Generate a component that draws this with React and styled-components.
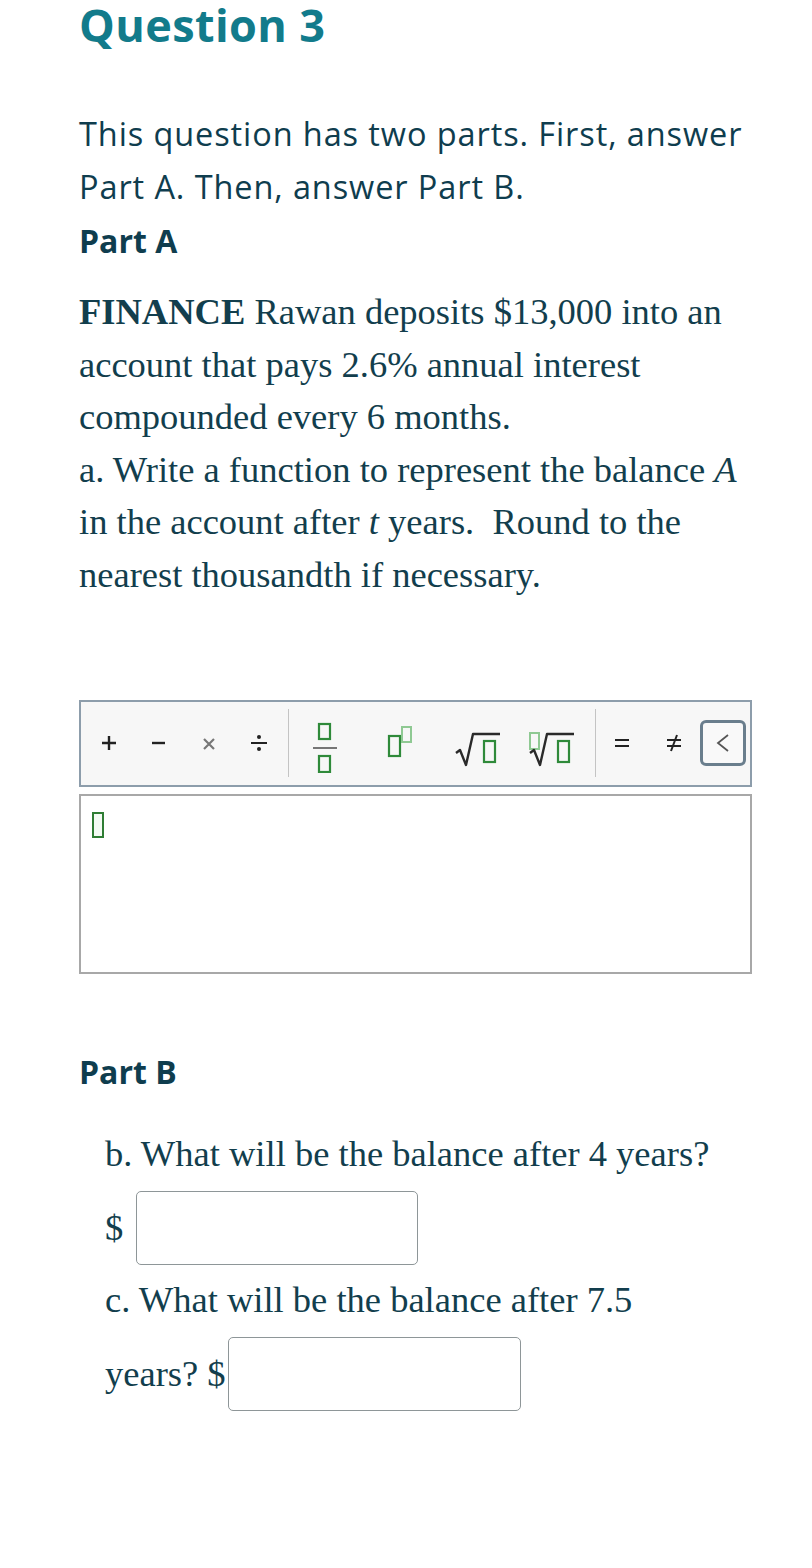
import styled, { createGlobalStyle } from "styled-components";

const GlobalStyle = createGlobalStyle`
  body {
    margin: 0;
    background: #ffffff;
  }
`;

const Page = styled.main`
  width: 812px;
  min-height: 1568px;
  box-sizing: border-box;
  padding: 0 60px 0 79px;
  font-family: "Open Sans", "Lato", sans-serif;
  color: #0f3d4e;
`;

const Title = styled.h1`
  margin: 0;
  font-size: 45px;
  line-height: 50px;
  font-weight: 700;
  letter-spacing: 0.4px;
  color: #127b8b;
`;

const Intro = styled.p`
  margin: 57px 0 0;
  font-size: 32.5px;
  line-height: 53px;
  letter-spacing: 0.9px;
`;

const PartTitle = styled.h2`
  margin: ${({ top }) => top}px 0 0;
  font-size: 32px;
  line-height: 53px;
  font-weight: 700;
`;

const Prompt = styled.div`
  margin-top: 19px;
  font-family: "Liberation Serif", "Times New Roman", serif;
  font-size: 36.5px;
  line-height: 52.6px;
  color: #123e4d;

  p {
    margin: 0;
  }
  b {
    font-weight: 700;
  }
`;

const Toolbar = styled.div`
  margin-top: 98px;
  height: 87px;
  box-sizing: border-box;
  border: 2px solid #8d9dab;
  background: #f7f7f7;
  display: flex;
  align-items: center;
  padding-left: 3px;
`;

const Key = styled.div`
  width: ${({ w }) => w}px;
  height: 60px;
  flex: none;
  display: flex;
  align-items: center;
  justify-content: center;
`;

const Divider = styled.div`
  width: 1px;
  height: 68px;
  flex: none;
  background: #c4c4c4;
  margin-left: ${({ before }) => before}px;
`;

const MoreKey = styled.div`
  width: 46px;
  height: 46px;
  box-sizing: border-box;
  flex: none;
  border: 3px solid #6a7e8d;
  border-radius: 6px;
  display: flex;
  align-items: center;
  justify-content: center;
  background: #f9f9f9;
`;

const AnswerBox = styled.div`
  margin-top: 7px;
  height: 180px;
  box-sizing: border-box;
  border: 2px solid #a8a8a8;
  background: #fff;
  padding: 16px 0 0 11px;
`;

const Slot = styled.span`
  display: block;
  width: 12px;
  height: 26px;
  box-sizing: border-box;
  border: 2.5px solid #2f7d34;
  background: #f4fbf4;
`;

const PartB = styled.section`
  padding-left: 26px;
  font-family: "Liberation Serif", "Times New Roman", serif;
  font-size: 36.5px;
  color: #123e4d;
`;

const Question = styled.p`
  margin: ${({ top }) => top}px 0 0;
  line-height: 52.6px;
`;

const EntryRow = styled.div`
  margin-top: ${({ top }) => top}px;
  display: flex;
  align-items: center;
  gap: ${({ gap }) => gap}px;
  line-height: 1;
`;

const Entry = styled.div`
  width: ${({ w }) => w}px;
  height: 74px;
  box-sizing: border-box;
  border: 1.5px solid #8e9698;
  border-radius: 5px;
  background: #fff;
`;

const green = "#2f8a3a";
const lightGreen = "#8fc993";
const ink = "#222";

// plain operator glyphs drawn as strokes so their weight stays even
const PlusIcon = () => (
  <svg width="20" height="20" viewBox="0 0 20 20">
    <path d="M10 3 V17 M3 10 H17" stroke={ink} strokeWidth="2.4" />
  </svg>
);

const MinusIcon = () => (
  <svg width="20" height="20" viewBox="0 0 20 20">
    <path d="M3 10 H16" stroke={ink} strokeWidth="2.4" />
  </svg>
);

const TimesIcon = () => (
  <svg width="20" height="20" viewBox="0 0 20 20">
    <path d="M5 6 L15 16 M15 6 L5 16" stroke="#777" strokeWidth="2.2" />
  </svg>
);

const DivideIcon = () => (
  <svg width="22" height="22" viewBox="0 0 22 22">
    <path d="M3 11 H19" stroke={ink} strokeWidth="2" />
    <circle cx="11" cy="5" r="2" fill={ink} />
    <circle cx="11" cy="17" r="2" fill={ink} />
  </svg>
);

const EqualsIcon = () => (
  <svg width="20" height="20" viewBox="0 0 20 20">
    <path d="M3 7 H17 M3 13 H17" stroke={ink} strokeWidth="2.2" />
  </svg>
);

const NotEqualIcon = () => (
  <svg width="20" height="22" viewBox="0 0 20 22">
    <path d="M3 8 H17 M3 14 H17 M13 3 L7 19" stroke={ink} strokeWidth="2" />
  </svg>
);

const ChevronIcon = () => (
  <svg width="18" height="22" viewBox="0 0 18 22">
    <path d="M14 3 L4 11 L14 19" fill="none" stroke="#555" strokeWidth="1.8" />
  </svg>
);

const FractionIcon = () => (
  <svg width="30" height="60" viewBox="0 0 30 60">
    <rect x="9" y="11" width="11" height="15" fill="none" stroke={green} strokeWidth="2.2" />
    <line x1="3" y1="35" x2="27" y2="35" stroke="#555" strokeWidth="1.6" />
    <rect x="9" y="43" width="11" height="16" fill="none" stroke={green} strokeWidth="2.2" />
  </svg>
);

const PowerIcon = () => (
  <svg width="30" height="60" viewBox="0 0 30 60">
    <rect x="3" y="23" width="11" height="20" fill="none" stroke={green} strokeWidth="2.2" />
    <rect x="16" y="14" width="9" height="15" fill="none" stroke={lightGreen} strokeWidth="2" />
  </svg>
);

const RootIcon = ({ indexed }) => (
  <svg width="46" height="60" viewBox="0 0 46 60">
    {indexed && (
      <rect x="1" y="20" width="9" height="16" fill="none" stroke={lightGreen} strokeWidth="2" />
    )}
    <path
      d="M1 40 L5 37 L11 52 L18 21 L45 21"
      fill="none"
      stroke="#2a2a2a"
      strokeWidth="2.4"
      strokeLinejoin="round"
    />
    <rect x="29" y="28" width="11" height="21" fill="none" stroke={green} strokeWidth="2.2" />
  </svg>
);

export default function App() {
  return (
    <Page>
      <GlobalStyle />
      <Title>Question 3</Title>
      <Intro>
        This question has two parts. First, answer Part A. Then, answer Part B.
      </Intro>
      <PartTitle top={1}>Part A</PartTitle>

      <Prompt>
        <p>
          <b>FINANCE</b> Rawan deposits $13,000 into an account that pays 2.6% annual
          interest compounded every 6 months.
        </p>
        <p>
          a. Write a function to represent the balance <i>A</i> in the account after{" "}
          <i>t</i> years.&nbsp; Round to the nearest thousandth if necessary.
        </p>
      </Prompt>

      <Toolbar>
        <Key w={50}><PlusIcon /></Key>
        <Key w={50}><MinusIcon /></Key>
        <Key w={50}><TimesIcon /></Key>
        <Key w={50}><DivideIcon /></Key>
        <Divider before={4} />
        <Key w={72}>
          <FractionIcon />
        </Key>
        <Key w={80}>
          <PowerIcon />
        </Key>
        <Key w={74}>
          <RootIcon />
        </Key>
        <Key w={74}>
          <RootIcon indexed />
        </Key>
        <Divider before={6} />
        <Key w={52}><EqualsIcon /></Key>
        <Key w={52}><NotEqualIcon /></Key>
        <MoreKey>
          <ChevronIcon />
        </MoreKey>
      </Toolbar>

      <AnswerBox>
        <Slot />
      </AnswerBox>

      <PartTitle top={71}>Part B</PartTitle>

      <PartB>
        <Question top={30}>b. What will be the balance after 4 years?</Question>
        <EntryRow top={11} gap={13}>
          <span>$</span>
          <Entry w={282} />
        </EntryRow>
        <Question top={9}>c. What will be the balance after 7.5</Question>
        <EntryRow top={10} gap={2}>
          <span>years? $</span>
          <Entry w={293} />
        </EntryRow>
      </PartB>
    </Page>
  );
}
